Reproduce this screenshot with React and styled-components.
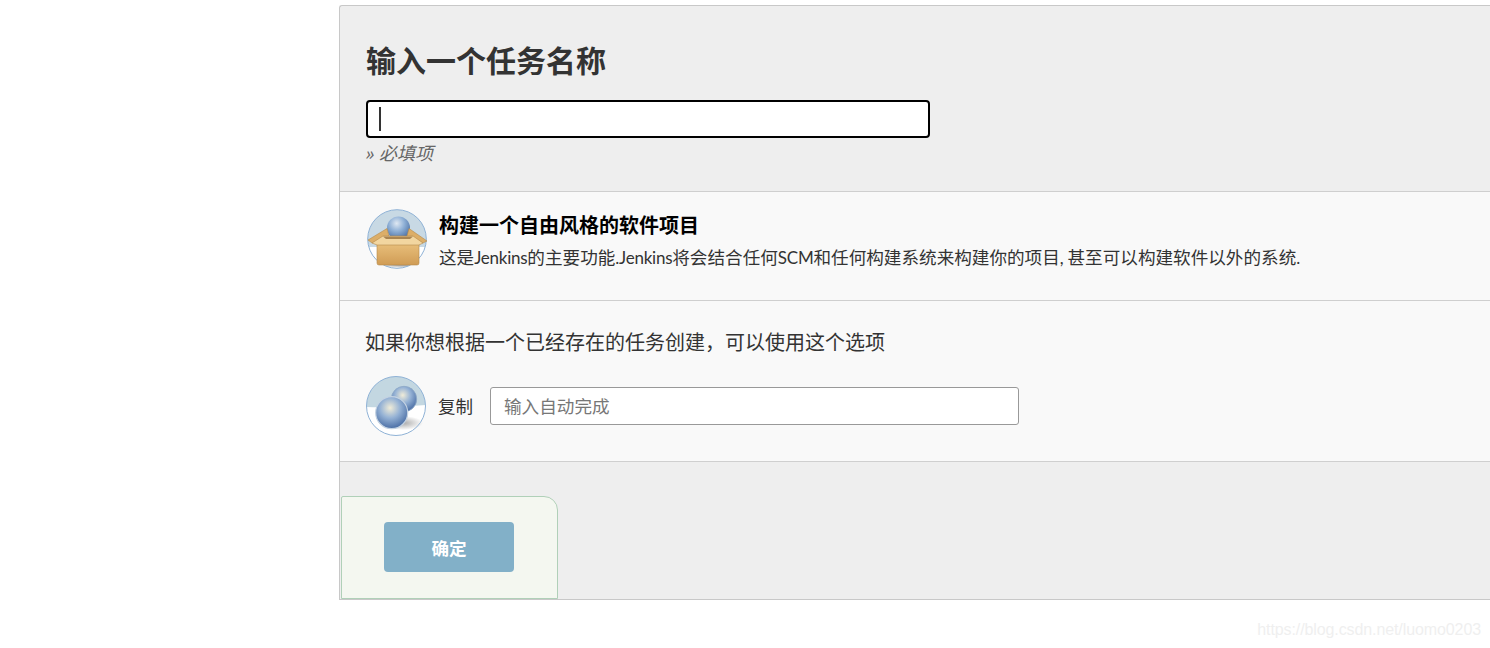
import React from 'react';
import styled, { createGlobalStyle } from 'styled-components';

const cjk = '"Open Sans", "Noto Sans CJK SC", "Noto Sans", sans-serif';
const narrow = 'Lato, "Noto Sans CJK SC", "Noto Sans", sans-serif';

const Global = createGlobalStyle`
  html, body { margin: 0; padding: 0; background: #fff; overflow: hidden; }
  body { font-family: ${cjk}; color: #333; }
`;

const Page = styled.div`
  width: 1490px;
  height: 648px;
  padding: 5px 0 0 339px;
  box-sizing: border-box;
  overflow: hidden;
  position: relative;
`;

const Panel = styled.main`
  width: 1170px;
  height: 595px;
  box-sizing: border-box;
  background: #eee;
  border: 1px solid #c8c8c8;
  border-right: none;
  border-top-left-radius: 3px;
  display: flex;
  flex-direction: column;
`;

const Header = styled.section`
  height: 185px;
  box-sizing: border-box;
  padding: 36px 0 0 26px;
  flex: none;
`;

const Title = styled.h1`
  margin: 0;
  font-size: 30px;
  line-height: 38px;
  font-weight: 700;
  color: #333;
`;

const NameField = styled.div`
  margin-top: 20px;
  width: 564px;
  height: 38px;
  box-sizing: border-box;
  background: #fff;
  border: 2px solid #000;
  border-radius: 4px;
  display: flex;
  align-items: center;
  padding-left: 11px;
`;

const Caret = styled.span`
  width: 2px;
  height: 24px;
  background: #333;
`;

const Required = styled.div`
  margin-top: 3px;
  font-size: 18px;
  line-height: 24px;
  font-style: italic;
  color: #666;
`;

const Section = styled.section`
  background: #f9f9f9;
  border-top: 1px solid #cfcfcf;
  box-sizing: border-box;
  flex: none;
  height: ${p => p.$h}px;
`;

const JobRow = styled.div`
  display: flex;
  align-items: flex-start;
  padding: 17px 0 0 26px;
`;

const JobText = styled.div`
  margin-left: 11px;
  padding-top: 4px;
`;

const JobTitle = styled.div`
  font-size: 20px;
  line-height: 26px;
  font-weight: 700;
  color: #000;
`;

const JobDesc = styled.div`
  margin-top: 7px;
  font-family: ${narrow};
  font-size: 17.6px;
  line-height: 24px;
  color: #333;
`;

const Latin = styled.span`
  font-size: 17px;
  letter-spacing: -0.25px;
`;

const CopyPrompt = styled.div`
  padding: 29px 0 0 25px;
  font-size: 20px;
  line-height: 26px;
  color: #333;
`;

const CopyRow = styled.div`
  display: flex;
  align-items: center;
  margin-top: 19px;
  padding-left: 25px;
`;

const CopyLabel = styled.span`
  margin-left: 11px;
  padding-bottom: 2px;
  font-size: 17.5px;
  color: #333;
`;

const CopyInput = styled.input`
  margin-left: 17px;
  width: 529px;
  height: 38px;
  box-sizing: border-box;
  border: 1px solid #999;
  border-radius: 3px;
  background: #fff;
  padding: 0 13px;
  font: 17.6px ${cjk};
  outline: none;
  &::placeholder { color: #777; opacity: 1; }
`;

const Footer = styled.footer`
  flex: 1;
  display: flex;
  align-items: flex-end;
  border-top: 1px solid #cfcfcf;
`;

const SaveBar = styled.div`
  margin-left: 1px;
  width: 217px;
  height: 103px;
  box-sizing: border-box;
  background: #f4f7f0;
  border: 1px solid #b0d0b8;
  border-top-right-radius: 14px;
  border-top-left-radius: 2px;
  padding: 25px 0 0 42px;
`;

const SaveButton = styled.button`
  display: block;
  width: 130px;
  height: 50px;
  border: none;
  border-radius: 4px;
  background: #82b0c8;
  color: #fff;
  font: 700 17.6px ${cjk};
  padding: 0;
`;

const Watermark = styled.div`
  position: absolute;
  right: 9px;
  top: 620px;
  font: 16px "Liberation Sans", Arial, sans-serif;
  letter-spacing: -0.1px;
  line-height: 20px;
  color: #efefef;
`;

const IconSvg = styled.svg`
  display: block;
  flex: none;
`;

const FreestyleIcon = () => (
  <IconSvg width="62" height="62" viewBox="0 0 62 62">
    <defs>
      <radialGradient id="fs-ball" cx="0.42" cy="0.3" r="0.75">
        <stop offset="0" stopColor="#dfe8f2" />
        <stop offset="0.45" stopColor="#8fb0d6" />
        <stop offset="1" stopColor="#44699f" />
      </radialGradient>
      <linearGradient id="fs-box" x1="0" y1="0" x2="0" y2="1">
        <stop offset="0" stopColor="#e9c07c" />
        <stop offset="1" stopColor="#d09c55" />
      </linearGradient>
      <radialGradient id="fs-shadow" cx="0.5" cy="0.5" r="0.5">
        <stop offset="0" stopColor="#555" />
        <stop offset="1" stopColor="#555" stopOpacity="0" />
      </radialGradient>
      <clipPath id="fs-clip">
        <circle cx="31" cy="30" r="29.3" />
      </clipPath>
    </defs>
    <circle cx="31" cy="30" r="29.3" fill="#c8d9e4" />
    <path d="M0 38 H62 V62 H0z" fill="#fff" clipPath="url(#fs-clip)" />
    <ellipse cx="36" cy="54" rx="28" ry="5" fill="url(#fs-shadow)" clipPath="url(#fs-clip)" />
    <circle cx="31" cy="30" r="29.3" fill="none" stroke="#8fb2d6" strokeWidth="1" />
    <path d="M15 27 H48 V34 H15z" fill="#b08a52" />
    <circle cx="32.5" cy="19" r="11.5" fill="url(#fs-ball)" />
    <path d="M21 19.5 L2 31 L6 34 L23 27z" fill="#dcae68" stroke="#b58a4a" strokeWidth="0.6" />
    <path d="M43 19.5 L61 32 L57 34 L41 27z" fill="#dcae68" stroke="#b58a4a" strokeWidth="0.6" />
    <path d="M11 34 H53 V54 Q53 56 51 56 H13 Q11 56 11 54z" fill="url(#fs-box)" stroke="#b58a4a" strokeWidth="0.6" />
    <path d="M6 34 L17 27 H47 L57 34 L53 36 H11z" fill="#f2d6a0" stroke="#b58a4a" strokeWidth="0.6" />
    <path d="M17 27.5 H47 L44 30 H20z" fill="#a98450" />
  </IconSvg>
);

const CopyIcon = () => (
  <IconSvg width="62" height="62" viewBox="0 0 62 62">
    <defs>
      <radialGradient id="cp-ball" cx="0.45" cy="0.35" r="0.7">
        <stop offset="0" stopColor="#f0ecd8" />
        <stop offset="0.45" stopColor="#95b2d5" />
        <stop offset="1" stopColor="#3f649e" />
      </radialGradient>
      <radialGradient id="cp-shadow" cx="0.5" cy="0.5" r="0.5">
        <stop offset="0" stopColor="#aaa" />
        <stop offset="1" stopColor="#aaa" stopOpacity="0" />
      </radialGradient>
      <clipPath id="cp-clip">
        <circle cx="31" cy="31" r="29.5" />
      </clipPath>
    </defs>
    <circle cx="31" cy="31" r="29.5" fill="#fff" />
    <path d="M0 0 H62 V30 Q31 33 0 32z" fill="#c3d7e1" clipPath="url(#cp-clip)" />
    <ellipse cx="38" cy="48" rx="20" ry="7" fill="url(#cp-shadow)" />
    <circle cx="39" cy="24" r="12.7" fill="url(#cp-ball)" stroke="#8ea8c6" strokeWidth="0.8" />
    <circle cx="26.7" cy="37.7" r="16" fill="url(#cp-ball)" stroke="#c3d2e2" strokeWidth="1.2" />
    <circle cx="31" cy="31" r="29.5" fill="none" stroke="#8fb2d6" strokeWidth="1" />
  </IconSvg>
);

export default function App() {
  return (
    <Page>
      <Global />
      <Panel>
        <Header>
          <Title>输入一个任务名称</Title>
          <NameField><Caret /></NameField>
          <Required>» 必填项</Required>
        </Header>
        <Section $h={109}>
          <JobRow>
            <FreestyleIcon />
            <JobText>
              <JobTitle>构建一个自由风格的软件项目</JobTitle>
              <JobDesc>这是<Latin>Jenkins</Latin>的主要功能<Latin>.Jenkins</Latin>将会结合任何<Latin>SCM</Latin>和任何构建系统来构建你的项目<Latin>, </Latin>甚至可以构建软件以外的系统<Latin>.</Latin></JobDesc>
            </JobText>
          </JobRow>
        </Section>
        <Section $h={161}>
          <CopyPrompt>如果你想根据一个已经存在的任务创建，可以使用这个选项</CopyPrompt>
          <CopyRow>
            <CopyIcon />
            <CopyLabel>复制</CopyLabel>
            <CopyInput placeholder="输入自动完成" />
          </CopyRow>
        </Section>
        <Footer>
          <SaveBar>
            <SaveButton>确定</SaveButton>
          </SaveBar>
        </Footer>
      </Panel>
      <Watermark>https://blog.csdn.net/luomo0203</Watermark>
    </Page>
  );
}
